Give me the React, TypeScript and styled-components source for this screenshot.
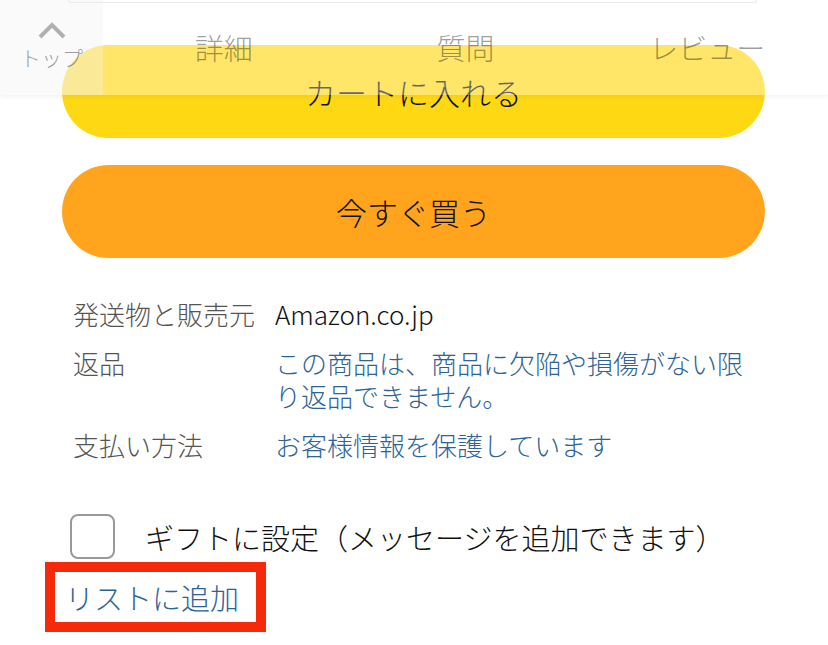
import React from "react";
import styled, { createGlobalStyle } from "styled-components";

const GlobalStyle = createGlobalStyle`
  html, body {
    margin: 0;
    padding: 0;
    background: #fff;
  }
  body {
    font-family: "Noto Sans CJK JP", "Noto Sans", sans-serif;
    font-weight: 300;
    color: #111;
  }
`;

const Page = styled.div`
  position: relative;
  width: 828px;
  height: 645px;
  overflow: hidden;
`;

const Header = styled.header`
  position: absolute;
  top: 0;
  left: 0;
  right: 0;
  height: 95px;
  display: flex;
  background: rgba(255, 255, 255, 0.36);
  box-shadow: 0 2px 4px rgba(0, 0, 0, 0.05);
  z-index: 2;
`;

const TopButton = styled.div`
  width: 103px;
  display: flex;
  flex-direction: column;
  align-items: center;
  padding-top: 22px;
  box-sizing: border-box;
  background: rgba(240, 240, 240, 0.35);
  color: rgba(0, 0, 0, 0.4);
  font-size: 21px;
  line-height: 24px;
`;

const Chevron = styled.svg`
  width: 28px;
  height: 17px;
  margin-bottom: 6px;
`;

const Tab = styled.div`
  flex: 1;
  text-align: center;
  padding-top: 29px;
  font-size: 29px;
  line-height: 36px;
  color: rgba(0, 0, 0, 0.4);
`;

const Content = styled.main`
  padding: 0 63px 0 62px;
`;

const TopBox = styled.div`
  height: 2px;
  margin: 0 8px 0 6px;
  border: 1px solid #ddd;
  border-top: none;
  border-radius: 0 0 10px 10px;
`;

const PillButton = styled.div<{ $bg: string; $mt: number }>`
  margin-top: ${(p) => p.$mt}px;
  height: 93px;
  border-radius: 47px;
  background: ${(p) => p.$bg};
  display: flex;
  align-items: center;
  justify-content: center;
  font-size: 31px;
  color: #111;
`;

const Details = styled.div`
  margin-top: 39px;
  padding-left: 11px;
  display: flex;
  flex-direction: column;
  gap: 16px;
  font-size: 26px;
  line-height: 33px;
`;

const DetailRow = styled.div`
  display: flex;
`;

const Label = styled.div`
  width: 202px;
  flex-shrink: 0;
  color: #555;
`;

const Value = styled.div<{ $link?: boolean }>`
  width: 470px;
  color: ${(p) => (p.$link ? "#2d6497" : "#111")};
`;

const GiftRow = styled.label`
  margin-top: 53px;
  padding-left: 8px;
  display: flex;
  align-items: center;
  gap: 30px;
  font-size: 29px;
  line-height: 36px;
`;

const CheckBox = styled.span`
  width: 41px;
  height: 41px;
  border: 2px solid #999;
  border-radius: 8px;
  flex-shrink: 0;
`;

const Marked = styled.div`
  margin: 3px 0 0 45px;
  width: 190px;
  height: 50px;
  border: 10px solid #f52a0b;
  display: flex;
  align-items: center;
  padding-left: 11px;
`;

const ListLink = styled.a`
  color: #2d6497;
  font-size: 29px;
  line-height: 36px;
  text-decoration: none;
  margin-left: -1px;
`;

const details = [
  { label: "発送物と販売元", value: "Amazon.co.jp", link: false },
  {
    label: "返品",
    value: "この商品は、商品に欠陥や損傷がない限り返品できません。",
    link: true,
  },
  { label: "支払い方法", value: "お客様情報を保護しています", link: true },
];

const tabs = ["詳細", "質問", "レビュー"];

const App = () => {
  return (
    <Page>
      <GlobalStyle />
      <Header>
        <TopButton>
          <Chevron viewBox="0 0 28 17">
            <path
              d="M2 15 L14 3 L26 15"
              fill="none"
              stroke="#b0b0b0"
              strokeWidth="4"
            />
          </Chevron>
          トップ
        </TopButton>
        {tabs.map((t) => (
          <Tab key={t}>{t}</Tab>
        ))}
      </Header>

      <Content>
        <TopBox />
        <PillButton $bg="#ffd814" $mt={42}>
          カートに入れる
        </PillButton>
        <PillButton $bg="#ffa41c" $mt={27}>
          今すぐ買う
        </PillButton>

        <Details>
          {details.map((d) => (
            <DetailRow key={d.label}>
              <Label>{d.label}</Label>
              <Value $link={d.link}>{d.value}</Value>
            </DetailRow>
          ))}
        </Details>

        <GiftRow>
          <CheckBox />
          ギフトに設定（メッセージを追加できます）
        </GiftRow>
      </Content>

      <Marked>
        <ListLink href="#">リストに追加</ListLink>
      </Marked>
    </Page>
  );
};

export default App;
